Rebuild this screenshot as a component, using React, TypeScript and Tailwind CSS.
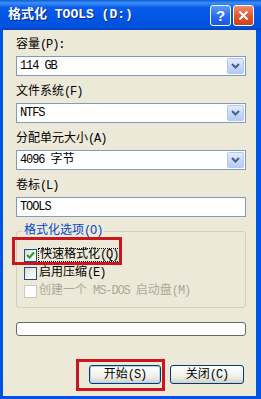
import React from "react";

const font = "font-['Liberation_Mono','Noto_Sans_CJK_SC',monospace]";

// SimSun-style half-width latin: tighten ASCII runs to ~6px per char
function Txt({ s }: { s: string }) {
  const parts = s.split(/([\x20-\x7e]+)/);
  return (
    <>
      {parts.map((p, i) =>
        /^[\x20-\x7e]+$/.test(p) ? (
          <span key={i} className="text-[12px] tracking-[-1.1px]">
            {p}
          </span>
        ) : (
          <React.Fragment key={i}>{p}</React.Fragment>
        )
      )}
    </>
  );
}

function DropBtn() {
  return (
    <div className="flex h-[16px] w-[17px] items-center justify-center rounded-[2px] border border-[#b4c8f6] bg-[linear-gradient(180deg,#e4ecfd_0%,#c6d6fa_60%,#b6cbf7_100%)]">
      <svg width="9" height="6" viewBox="0 0 9 6">
        <path d="M1 1 L4.5 4.5 L8 1" fill="none" stroke="#4d6185" strokeWidth="2" />
      </svg>
    </div>
  );
}

function Combo({ value }: { value: string }) {
  return (
    <div className="flex h-[20px] items-center border border-[#7f9db9] bg-white pl-[3px] pr-[1px]">
      <span className="flex-1 text-[12px] leading-none text-black">
        <Txt s={value} />
      </span>
      <DropBtn />
    </div>
  );
}

function Field({ label, children }: { label: string; children: React.ReactNode }) {
  return (
    <div className="mb-[10px]">
      <div className="mb-[5px] text-[12px] leading-[12px] text-black">
        <Txt s={label} />
      </div>
      {children}
    </div>
  );
}

function Check({ checked, disabled }: { checked?: boolean; disabled?: boolean }) {
  return (
    <div
      className={`flex h-[13px] w-[13px] items-center justify-center border ${
        disabled
          ? "border-[#cac8bb] bg-white"
          : "border-[#1c5180] bg-[linear-gradient(135deg,#dcdcd7_0%,#f4f4f0_60%,#ffffff_100%)]"
      }`}
    >
      {checked && (
        <svg width="9" height="8" viewBox="0 0 9 8">
          <path d="M1 4 L3.5 6.5 L8 1.5" fill="none" stroke="#21a121" strokeWidth="2" />
        </svg>
      )}
    </div>
  );
}

export default function App() {
  return (
    <div className={`flex h-[399px] w-[261px] flex-col bg-[#0054e3] ${font}`}>
      {/* Title bar */}
      <div className="flex h-[30px] items-center bg-[linear-gradient(180deg,#0a5fd8_0%,#3d8ef7_10%,#0a5ceb_25%,#0055e5_60%,#0052dd_90%,#0a3fbf_100%)] pl-[8px] pr-[7px]">
        <span className="flex-1 text-[13px] font-bold text-white [text-shadow:1px_1px_0_#0a2a8a]">
          格式化 TOOLS (D:)
        </span>
        <div className="flex gap-[2px]">
          <div className="flex h-[21px] w-[21px] items-center justify-center rounded-[3px] border border-white bg-[linear-gradient(180deg,#5c9df9_0%,#2b6ef0_50%,#1a56e0_100%)] text-[15px] font-bold leading-none text-white font-['Liberation_Sans',sans-serif]">
            ?
          </div>
          <div className="flex h-[21px] w-[21px] items-center justify-center rounded-[3px] border border-white bg-[linear-gradient(180deg,#ee8f6f_0%,#e2582f_50%,#cc4119_100%)]">
            <svg width="11" height="11" viewBox="0 0 11 11">
              <path d="M1.5 1.5 L9.5 9.5 M9.5 1.5 L1.5 9.5" stroke="white" strokeWidth="2" />
            </svg>
          </div>
        </div>
      </div>

      {/* Body */}
      <div className="mb-[3px] ml-[3px] mr-[5px] flex-1 bg-[#ece9d8] pl-[13px] pr-[10px] pt-[9px]">
        <Field label="容量(P):">
          <Combo value="114 GB" />
        </Field>
        <Field label="文件系统(F)">
          <Combo value="NTFS" />
        </Field>
        <Field label="分配单元大小(A)">
          <Combo value="4096 字节" />
        </Field>
        <Field label="卷标(L)">
          <div className="flex h-[20px] items-center border border-[#7f9db9] bg-white pl-[3px] text-[12px] leading-none text-black">
            <Txt s="TOOLS" />
          </div>
        </Field>

        {/* Options group */}
        <div className="relative mt-[14px] rounded-[3px] border border-[#d0d0bf] pb-[7px] pl-[7px] pt-[14px]">
          <span className="absolute left-[5px] top-[-8px] bg-[#ece9d8] px-[2px] text-[12px] leading-[14px] text-[#0046d5]">
            <Txt s="格式化选项(O)" />
          </span>
          <div className="relative flex h-[18px] items-center">
            <Check checked />
            <span className="ml-[1px] border border-dotted border-black px-[1px] text-[12px] leading-[12px] text-black">
              <Txt s="快速格式化(Q)" />
            </span>
            <div className="absolute left-[-12px] top-[-9px] h-[28px] w-[110px] border-[3px] border-[#c8171e]" />
          </div>
          <div className="flex h-[18px] items-center">
            <Check />
            <span className="ml-[2px] text-[12px] leading-[12px] text-black">
              <Txt s="启用压缩(E)" />
            </span>
          </div>
          <div className="flex h-[18px] items-center">
            <Check disabled />
            <span className="ml-[2px] text-[12px] leading-[12px] text-[#aca899]">
              <Txt s="创建一个 MS-DOS 启动盘(M)" />
            </span>
          </div>
        </div>

        {/* Progress bar */}
        <div className="mt-[14px] h-[14px] rounded-[3px] border border-[#686868] bg-white" />

        {/* Buttons */}
        <div className="mt-[29px] flex justify-end gap-[9px] pr-[2px]">
          <div className="relative">
            <div className="flex h-[19px] w-[72px] items-center justify-center rounded-[3px] border border-[#003c74] bg-[linear-gradient(180deg,#ffffff_0%,#f0f0ea_60%,#d6d0c5_100%)] text-[12px] leading-none text-black shadow-[inset_0_0_0_1px_#b6cdf5]">
              <Txt s="开始(S)" />
            </div>
            <div className="absolute -bottom-[7px] -left-[13px] -right-[4px] -top-[6px] border-[3px] border-[#c8171e]" />
          </div>
          <div className="flex h-[19px] w-[74px] items-center justify-center rounded-[3px] border border-[#003c74] bg-[linear-gradient(180deg,#ffffff_0%,#f0f0ea_60%,#d6d0c5_100%)] text-[12px] leading-none text-black">
            <Txt s="关闭(C)" />
          </div>
        </div>
      </div>
    </div>
  );
}
